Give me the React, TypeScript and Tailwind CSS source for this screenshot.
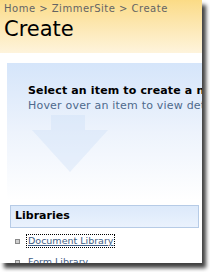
import React from 'react';

const links = ['Document Library', 'Form Library', 'Wiki Page Library', 'Picture Library'];

export default function App() {
  return (
    <div className="w-[210px] h-[272px] bg-white overflow-hidden font-['DejaVu_Sans',Verdana,sans-serif]">
      <div className="w-[202px] h-[263px] overflow-hidden bg-white shadow-[4px_5px_4px_rgba(0,0,0,0.75)]">
        {/* Title area */}
        <div className="h-[53px] bg-gradient-to-b from-[#fbdb86] to-[#fef4dc] pl-[4px] pt-[2px]">
          <div className="text-[10px] leading-[13px] tracking-[0.5px] text-[#646464] whitespace-nowrap">
            Home &gt; ZimmerSite &gt; Create
          </div>
          <h1 className="mt-[2px] text-[21px] leading-[24px] text-black">Create</h1>
        </div>

        <div className="pt-[10px] pl-[7px]">
          {/* Intro panel */}
          <div className="relative w-[240px] h-[137px] bg-gradient-to-b from-[#d5e5fa] via-[#edf3fc] to-white pl-[21px] pt-[20px]">
            <svg
              className="absolute left-[25px] top-[52px]"
              width="78"
              height="58"
              viewBox="0 0 78 58"
            >
              <path d="M19 0 H53 V15 H76 L38 57 L0 15 H19 Z" fill="#c9dcf5" fillOpacity="0.35" />
            </svg>
            <div className="relative whitespace-nowrap text-[11px] leading-[15px] tracking-[0.15px] font-bold text-black">
              Select an item to create a new
            </div>
            <div className="relative whitespace-nowrap text-[11px] leading-[15px] tracking-[0.2px] text-[#4e6a8d]">
              Hover over an item to view details
            </div>
          </div>

          {/* Libraries */}
          <div className="mt-[5px] ml-[3px] w-[189px] h-[23px] border border-[#b6cbe6] bg-gradient-to-b from-[#dce9fa] to-[#eaf2fd] pl-[4px] flex items-center">
            <span className="text-[11px] font-bold text-black">Libraries</span>
          </div>
          <ul className="mt-[7px] ml-[8px] space-y-[9px]">
            {links.map((l, i) => (
              <li key={l} className="flex items-center gap-[7px]">
                <span className="w-[5px] h-[5px] border border-[#8a8a8a] bg-[#cfcfcf]" />
                <span
                  className={
                    'text-[9.5px] leading-[12px] text-[#3f5e86] underline px-[1px] ' +
                    (i === 0 ? 'outline outline-1 outline-dotted outline-black' : '')
                  }
                >
                  {l}
                </span>
              </li>
            ))}
          </ul>
        </div>
      </div>
    </div>
  );
}
